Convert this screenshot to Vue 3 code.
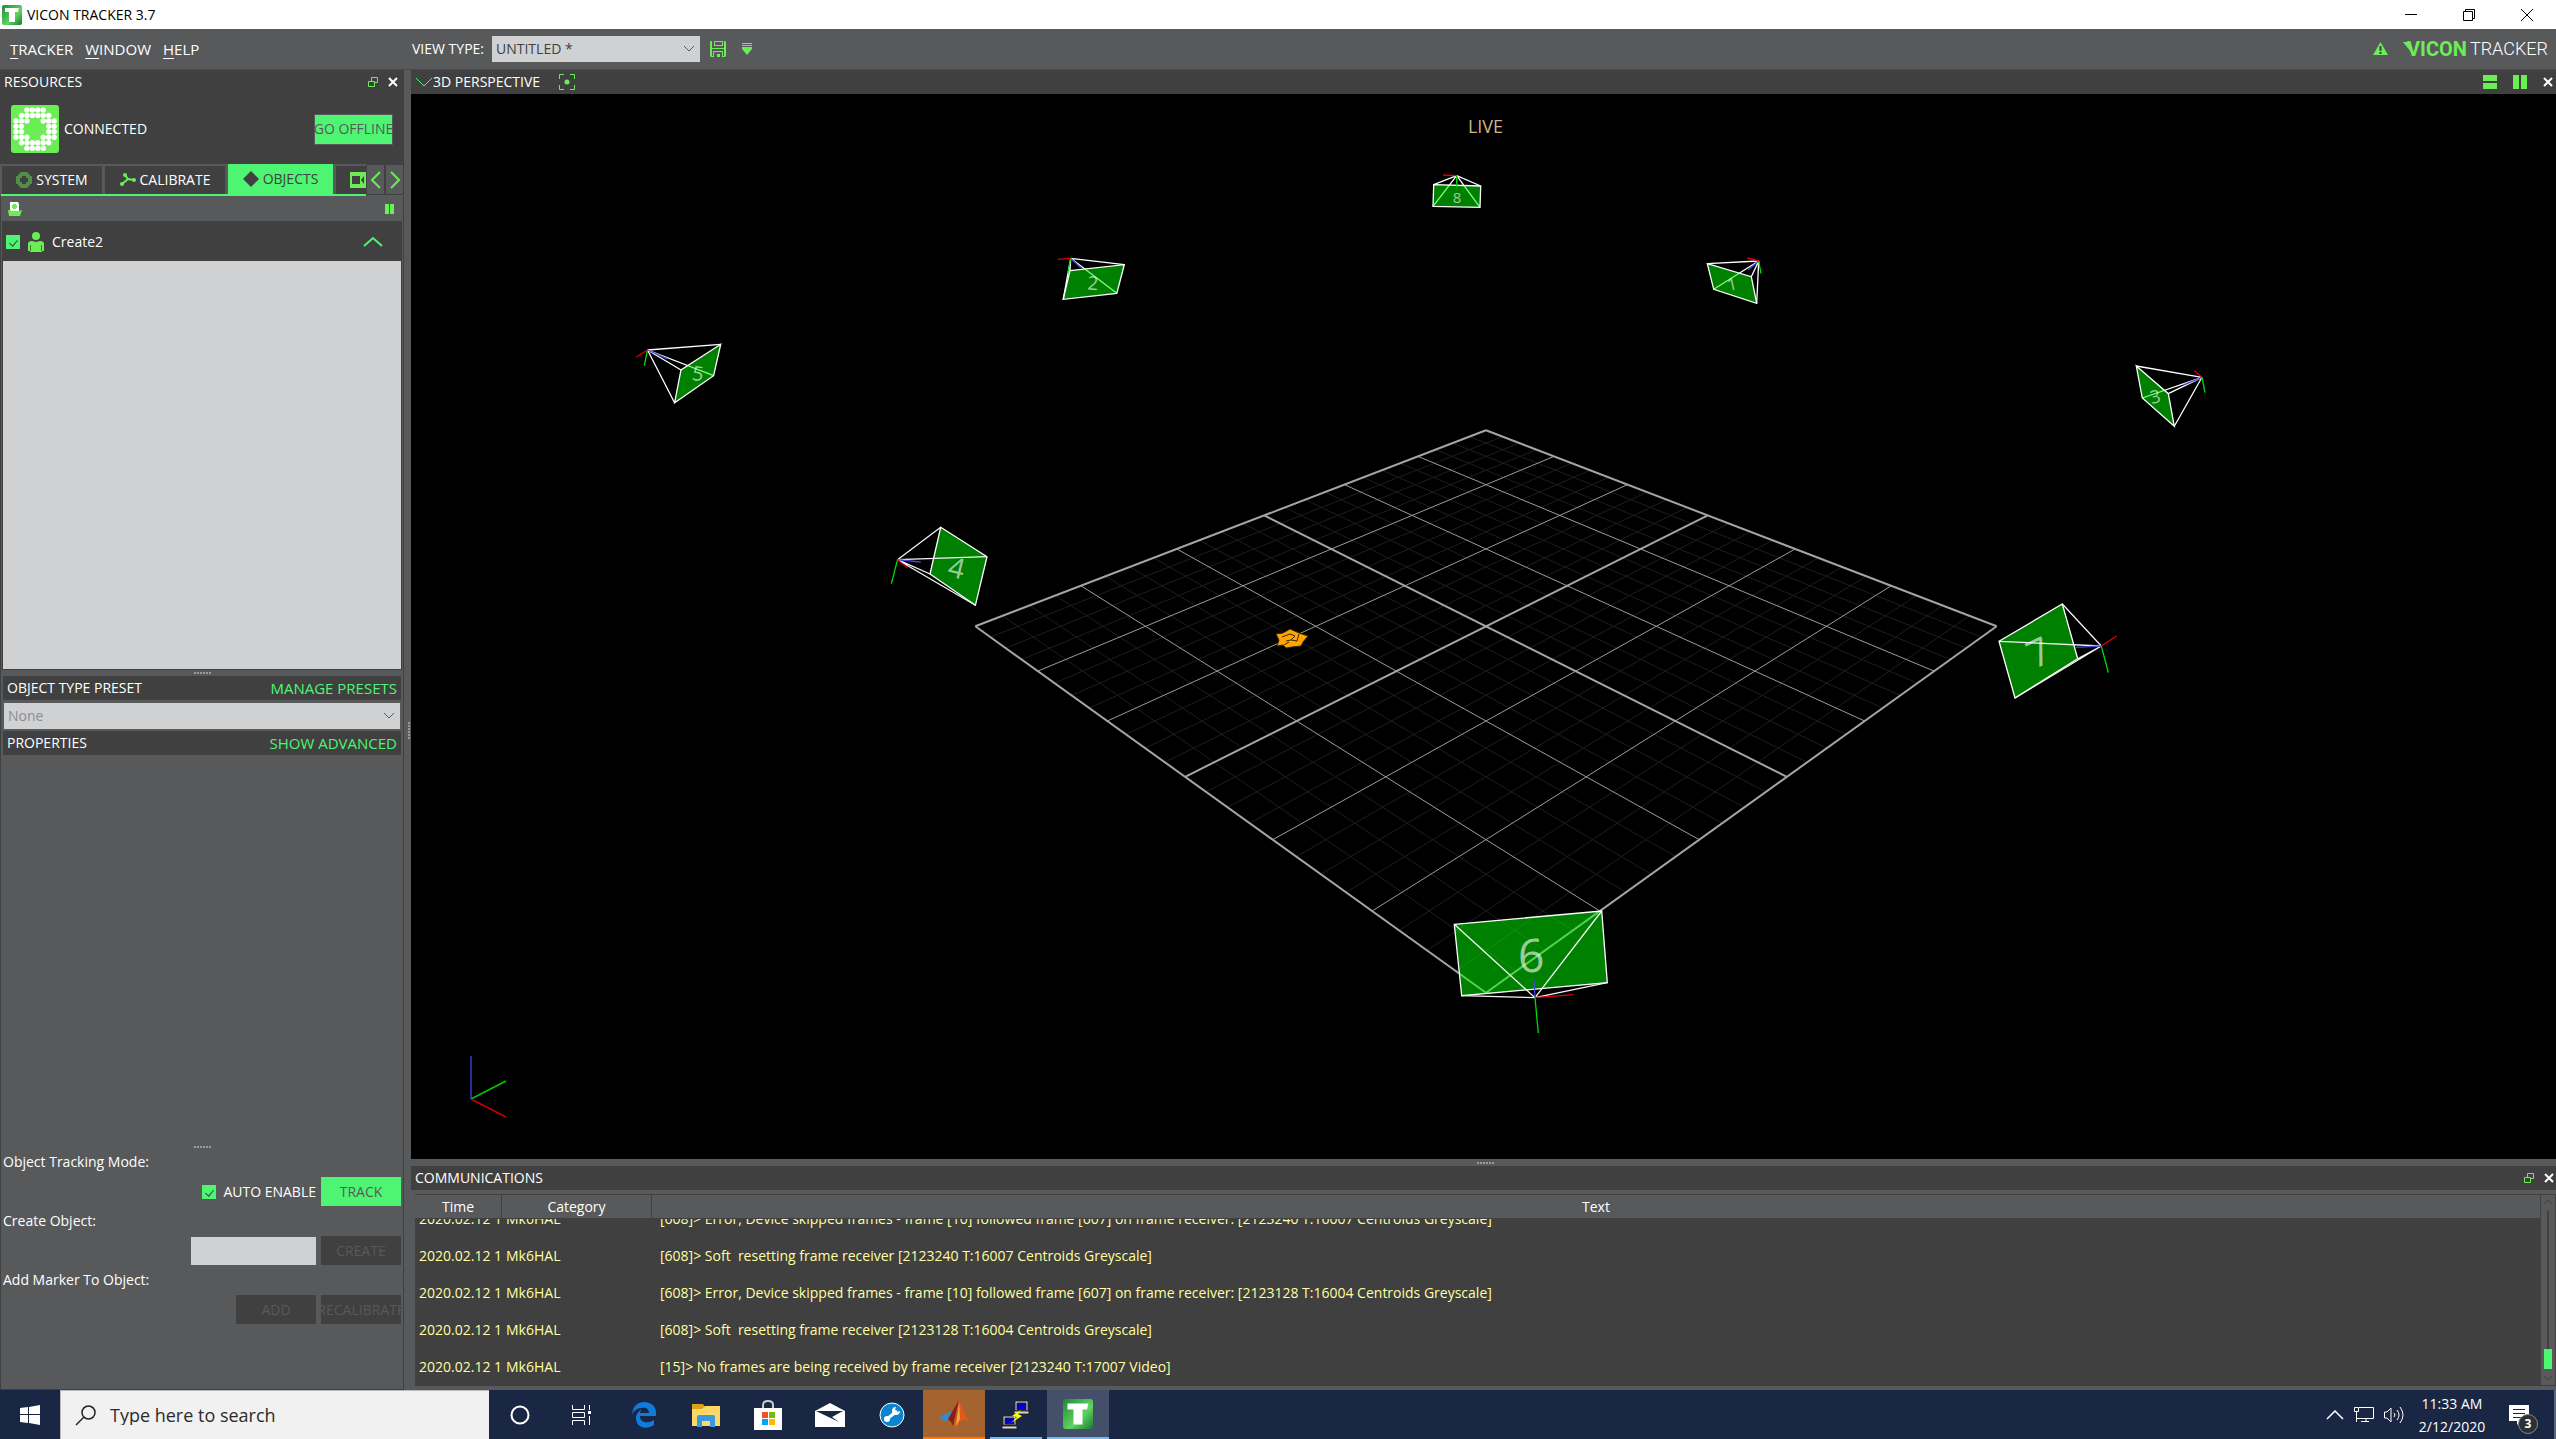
<script setup>
import { ref, onMounted } from 'vue'

const cameras = [
  { id: '8', size: 15, turn: 0, label: [1457, 197], front: false, apex: [1456.7, 175.7], quad: [[1433.7, 184.7], [1480.7, 186], [1480, 207.3], [1433, 206.3]], red: [1443, 175], green: [1456.7, 187], blue: [1456.7, 183] },
  { id: '2', size: 19, turn: 4, label: [1093, 283], front: false, apex: [1070.7, 258.3], quad: [[1070, 270.7], [1124.3, 264.7], [1116.8, 293.3], [1063.2, 299.3]], red: [1057.5, 259.3], green: [1068, 273], blue: [1080.7, 267.7] },
  { id: '1', size: 17, turn: -12, label: [1732, 284], front: false, apex: [1758.7, 261], quad: [[1707.3, 263.7], [1751.3, 276.7], [1756.7, 303.3], [1713.7, 289.3]], red: [1747.3, 258], green: [1761, 273.7], blue: [1748.3, 270] },
  { id: '5', size: 20, turn: 8, label: [698, 373], front: false, apex: [647.5, 350], quad: [[720.7, 344.3], [713.6, 375.7], [674.6, 402.7], [681, 370]], red: [636.4, 357], green: [644.3, 365.7], blue: [667, 358.7] },
  { id: '3', size: 18, turn: -12, label: [2155, 396], front: false, apex: [2202, 377.3], quad: [[2136.3, 366], [2168.3, 393.7], [2174.3, 426.3], [2142.3, 398]], red: [2194.3, 370.7], green: [2205, 392.7], blue: [2184.3, 384.7] },
  { id: '4', size: 28, turn: 14, label: [957, 567], front: true, apex: [897.5, 559.7], quad: [[940.7, 527.3], [987, 556.7], [975.4, 605.3], [930, 574]], red: [907.5, 567.7], green: [891.4, 583.7], blue: [920.7, 562] },
  { id: '7', size: 38, turn: -25, label: [2038, 651], front: true, apex: [2101.3, 646], quad: [[2062.3, 604], [2077.7, 658.7], [2015, 698], [1999, 641.3]], red: [2116.7, 636], green: [2108.3, 672.7], blue: [2075.3, 647.3] },
  { id: '6', size: 46, turn: -3, label: [1531, 954], front: true, apex: [1535, 997.7], quad: [[1454.3, 924.3], [1601.7, 911], [1607.3, 982.7], [1461.7, 995.7]], red: [1573.7, 994.7], green: [1538.3, 1033], blue: [1534, 980] },
]

const rays = (c) => c.quad.map((p) => `M${c.apex}L${p}`).join('')
const outline = (c) => `M${c.quad.join('L')}Z`

/* Floor plane in perspective: u and v run from -1 to 1 along its sides. */
function project(u, v) {
  const a = (u + v) / 2
  const b = (u - v) / 2
  const w = 1 - 0.303 * a
  return `${(1486 + (510.7 * b) / w).toFixed(1)} ${(626.3 + (255.4 * a) / w).toFixed(1)}`
}
function floorLines(test) {
  let d = ''
  for (let i = 0; i <= 24; i++) {
    if (!test(i)) continue
    const t = i / 12 - 1
    d += `M${project(t, -1)}L${project(t, 1)}M${project(-1, t)}L${project(1, t)}`
  }
  return d
}
const minorLines = floorLines((i) => i % 4 !== 0)
const majorLines = floorLines((i) => i % 4 === 0 && i % 12 !== 0)
const mainLines = floorLines((i) => i % 12 === 0)

const ringRows = ['..####..', '.######.', '###..###', '##....##', '##....##', '###..###', '.######.', '..####..']
const ringDots = ringRows.flatMap((row, y) => [...row].map((ch, x) => ({ ch, x, y })).filter((d) => d.ch === '#'))

const messages = [
  '[608]> Error, Device skipped frames - frame [10] followed frame [607] on frame receiver: [2123240 T:16007 Centroids Greyscale]',
  '[608]> Soft  resetting frame receiver [2123240 T:16007 Centroids Greyscale]',
  '[608]> Error, Device skipped frames - frame [10] followed frame [607] on frame receiver: [2123128 T:16004 Centroids Greyscale]',
  '[608]> Soft  resetting frame receiver [2123128 T:16004 Centroids Greyscale]',
  '[15]> No frames are being received by frame receiver [2123240 T:17007 Video]',
]

const log = ref(null)
onMounted(() => {
  log.value.scrollTop = log.value.scrollHeight
})
</script>

<template>
  <div class="screen">
    <header class="titlebar">
      <svg class="app-icon" width="20" height="20" viewBox="0 0 20 20">
        <defs>
          <linearGradient id="tg" x1="0" y1="0" x2="1" y2="1">
            <stop offset="0" stop-color="#1f8a35" />
            <stop offset=".6" stop-color="#5fd35f" />
            <stop offset="1" stop-color="#1c7a30" />
          </linearGradient>
        </defs>
        <rect width="20" height="20" rx="2" fill="url(#tg)" />
        <path d="M3 3h14l-1 4h-3v10H7V7H3z" fill="#fff" />
      </svg>
      <span class="title">VICON TRACKER 3.7</span>
      <div class="window-buttons">
        <button aria-label="Minimize"><svg width="12" height="12"><path d="M0 5.500h12" stroke="#000" /></svg></button>
        <button aria-label="Restore"><svg width="12" height="12"><path d="M.5 2.500h9v9h-9zM2.500 2.500v-2h9v9h-2" fill="none" stroke="#000" /></svg></button>
        <button aria-label="Close"><svg width="12" height="12"><path d="M0 0l12 12M12 0L0 12" stroke="#000" /></svg></button>
      </div>
    </header>

    <div class="menubar">
      <nav class="menus">
        <a href="#"><u>T</u>RACKER</a>
        <a href="#"><u>W</u>INDOW</a>
        <a href="#"><u>H</u>ELP</a>
      </nav>
      <label for="view-type">VIEW TYPE:</label>
      <div class="select-wrap view-select">
        <select id="view-type"><option>UNTITLED *</option></select>
        <svg width="12" height="8"><path d="M1 1l5 5 5-5" fill="none" stroke="#58595b" /></svg>
      </div>
      <button class="bare save" aria-label="Save view">
        <svg width="16" height="16" viewBox="0 0 16 16"><path fill="#6bee55" fill-rule="evenodd" d="M0 1L1 0h1v7h12V0h1l1 1v14l-1 1H1l-1-1zM4 0h9v5H4zM5 1v3h7V1zM4 16v-5h8v5h-2v-3H7v3zM2 8v7h1v-5h10v5h1V8z" /></svg>
      </button>
      <button class="bare" aria-label="More view options">
        <svg width="10" height="13" viewBox="0 0 10 13"><path fill="#6bee55" d="M0 0h10v1H0zM0 2h10v1H0zM0 4h10v2L5 12 0 6z" /></svg>
      </button>
      <svg class="warn" width="15" height="14" viewBox="0 0 15 14"><path fill="#6bee55" d="M7.500 0L15 13H0z" /><path d="M7.500 4v5M7.500 10v2" stroke="#404040" stroke-width="2" /></svg>
      <div class="brand">
        <svg width="8" height="14" viewBox="0 0 8 14"><path d="M0 0h5l3 5v5z" fill="#6bee55" /></svg>
        <b>VICON</b><span>TRACKER</span>
      </div>
    </div>

    <main class="workspace">
      <aside class="dock">
        <section class="resources">
          <div class="bar">
            <h2>RESOURCES</h2>
            <button class="bare" aria-label="Float panel"><svg width="10" height="10"><path d="M3.500 4V.5h6v5H6M.5 4.500h6v5h-6z" fill="none" stroke="#6bee55" /></svg></button>
            <button class="bare" aria-label="Close panel"><svg width="10" height="10"><path d="M1 1l8 8M9 1L1 9" stroke="#fff" stroke-width="2" /></svg></button>
          </div>
          <div class="connection">
            <svg width="48" height="48" viewBox="0 0 48 48">
              <rect width="48" height="48" rx="3" fill="#6bee55" />
              <circle v-for="d in ringDots" :key="`${d.x}-${d.y}`" :cx="5 + d.x * 5.450" :cy="5 + d.y * 5.450" r="2.700" fill="#fff" />
            </svg>
            <span>CONNECTED</span>
            <button class="offline">GO OFFLINE</button>
          </div>
        </section>

        <div class="tabs">
          <div class="tab-list">
            <button class="tab system">
              <svg width="16" height="16" viewBox="0 0 48 48"><circle v-for="d in ringDots" :key="`${d.x}-${d.y}`" :cx="3 + d.x * 6" :cy="3 + d.y * 6" r="2.500" fill="#6bee55" /></svg>
              SYSTEM
            </button>
            <button class="tab calibrate">
              <svg width="16" height="14" viewBox="0 0 16 14"><path d="M5 2l3 4 6 1M8 6L2 11" fill="none" stroke="#6bee55" stroke-width="2" /><circle cx="5" cy="2" r="2" fill="#6bee55" /><circle cx="14" cy="7" r="2" fill="#6bee55" /><circle cx="2" cy="11" r="2" fill="#6bee55" /></svg>
              CALIBRATE
            </button>
            <button class="tab objects active">
              <svg width="16" height="16" viewBox="0 0 16 16"><path d="M8 0l8 8-8 8-8-8z" fill="#404040" /></svg>
              OBJECTS
            </button>
            <button class="tab camera" aria-label="Camera">
              <svg width="16" height="16" viewBox="0 0 16 16"><path d="M0 0h16v16H0z" fill="#6bee55" /><path d="M2 4h8v8H2zM11 8l3-4v8z" fill="#404040" /></svg>
            </button>
          </div>
          <button class="step" aria-label="Previous tabs"><svg width="10" height="18"><path d="M9 1L1 9l8 8" fill="none" stroke="#6bee55" stroke-width="2" /></svg></button>
          <button class="step" aria-label="Next tabs"><svg width="10" height="18"><path d="M1 1l8 8-8 8" fill="none" stroke="#6bee55" stroke-width="2" /></svg></button>
        </div>

        <div class="tab-page">
          <div class="tools">
            <button class="bare" aria-label="Load object"><svg width="14" height="14"><path d="M2 0h8l1 2v7H2z" fill="#fff" /><path d="M0 8h3v1h8l3-1-2 6H1z" fill="#6bee55" /><path d="M6.500 2v5M4 4.500h5" stroke="#6bee55" stroke-width="3" /></svg></button>
            <button class="bare" aria-label="Pause"><svg width="10" height="10"><path d="M0 0h4v10H0zM5 0h4v10H5z" fill="#6bee55" /></svg></button>
          </div>
          <div class="object-list">
            <div class="object-row">
              <input id="create2" type="checkbox" checked />
              <svg width="16" height="20" viewBox="0 0 16 20"><circle cx="8" cy="4" r="4" fill="#6bee55" /><path d="M0 12q0-3 4-3l4 1 4-1q4 0 4 3v7h-2v1H2v-1H0z" fill="#6bee55" /><path d="M2.500 13v6M13.500 13v6" stroke="#404040" stroke-opacity=".7" /></svg>
              <label for="create2">Create2</label>
              <svg class="collapse" width="20" height="12"><path d="M1 10l9-8 9 8" fill="none" stroke="#4ef573" stroke-width="2" /></svg>
            </div>
          </div>
          <div class="grip"><i v-for="n in 6" :key="n"></i></div>
          <div class="strip"><label for="preset">OBJECT TYPE PRESET</label><a href="#">MANAGE PRESETS</a></div>
          <div class="select-wrap preset-select">
            <select id="preset" disabled><option>None</option></select>
            <svg width="12" height="8"><path d="M1 1l5 5 5-5" fill="none" stroke="#58595b" /></svg>
          </div>
          <div class="strip"><h2>PROPERTIES</h2><a href="#">SHOW ADVANCED</a></div>
          <div class="property-area"></div>
          <div class="grip form-grip"><i v-for="n in 6" :key="n"></i></div>
          <form class="actions" @submit.prevent>
            <p>Object Tracking Mode:</p>
            <div class="action-row">
              <input id="auto" type="checkbox" checked />
              <label for="auto" class="auto-label">AUTO ENABLE</label>
              <button class="primary">TRACK</button>
            </div>
            <label for="new-object" class="caption">Create Object:</label>
            <div class="action-row">
              <input id="new-object" type="text" />
              <button disabled>CREATE</button>
            </div>
            <p>Add Marker To Object:</p>
            <div class="action-row">
              <button disabled>ADD</button>
              <button disabled>RECALIBRATE</button>
            </div>
          </form>
        </div>
      </aside>

      <div class="grip vertical"><i v-for="n in 6" :key="n"></i></div>

      <div class="content">
        <div class="bar view-bar">
          <svg width="16" height="10"><path d="M0 1l8 8 8-8" fill="none" stroke="#4ef573" /></svg>
          <h2>3D PERSPECTIVE</h2>
          <button class="bare focus" aria-label="Focus"><svg width="16" height="16"><path d="M5 .5H.5V5M11 .5h4.500V5M5 15.500H.5V11M11 15.500h4.500V11" fill="none" stroke="#6bee55" /><circle cx="8" cy="8" r="2.500" fill="#6bee55" /></svg></button>
          <button class="bare" aria-label="Split horizontally"><svg width="14" height="14"><path d="M0 0h14v6H0zM0 8h14v6H0z" fill="#6bee55" /></svg></button>
          <button class="bare" aria-label="Split vertically"><svg width="14" height="14"><path d="M0 0h6v14H0zM8 0h6v14H8z" fill="#6bee55" /></svg></button>
          <button class="bare" aria-label="Close view"><svg width="10" height="10"><path d="M1 1l8 8M9 1L1 9" stroke="#fff" stroke-width="2" /></svg></button>
        </div>

        <div class="viewport">
          <svg class="scene" viewBox="411 94 2145 1065" preserveAspectRatio="xMidYMid slice">
            <path :d="minorLines" stroke="#1e1e1e" />
            <path :d="majorLines" stroke="#9c9c9c" />
            <path :d="mainLines" stroke="#a4a4a4" stroke-width="2" />

            <g stroke="#3a2600" stroke-width="1">
              <path d="M1276 634l7-1 7-4 9 4 9 3-5 6-2 4-9 1-6 1-3-3-6 1 2-6z" fill="#ffa500" />
              <path d="M1282 637l8-3 5 2-4 4-5 1M1291 640l6 1M1299 634l-2 7M1284 645l5-3" fill="none" />
            </g>

            <g v-for="c in cameras" :key="c.id" fill="none" stroke-width="1.300">
              <path v-if="!c.front" :d="rays(c)" stroke="#fff" />
              <path :d="outline(c)" fill="#0f0" fill-opacity=".5" stroke="#fff" />
              <text :x="c.label[0]" :y="c.label[1]" :font-size="c.size" :transform="`rotate(${c.turn} ${c.label})`">{{ c.id }}</text>
              <path v-if="c.front" :d="rays(c)" stroke="#f4f4f4" />
              <path :d="`M${c.apex}L${c.blue}`" stroke="#4444e0" />
              <path :d="`M${c.apex}L${c.green}`" stroke="#0d0" />
              <path :d="`M${c.apex}L${c.red}`" stroke="#e00000" />
            </g>

            <g stroke-width="1.500">
              <path d="M471 1099V1056" stroke="#2c2c98" stroke-width="2" />
              <path d="M471 1099L506 1081" stroke="#00c800" />
              <path d="M471 1099L506 1117" stroke="#c80000" />
            </g>
          </svg>
          <span class="live">LIVE</span>
        </div>

        <div class="grip comm-grip"><i v-for="n in 6" :key="n"></i></div>

        <section class="communications">
          <div class="bar comm-bar">
            <h2>COMMUNICATIONS</h2>
            <button class="bare" aria-label="Float panel"><svg width="10" height="10"><path d="M3.500 4V.5h6v5H6M.5 4.500h6v5h-6z" fill="none" stroke="#6bee55" /></svg></button>
            <button class="bare" aria-label="Close panel"><svg width="10" height="10"><path d="M1 1l8 8M9 1L1 9" stroke="#fff" stroke-width="2" /></svg></button>
          </div>
          <div class="log-frame">
            <div ref="log" class="log">
              <table>
                <colgroup><col class="c-time" /><col class="c-cat" /><col /></colgroup>
                <thead><tr><th>Time</th><th>Category</th><th>Text</th></tr></thead>
                <tbody>
                  <tr v-for="(m, i) in messages" :key="i"><td>2020.02.12 1</td><td>Mk6HAL</td><td>{{ m }}</td></tr>
                </tbody>
              </table>
            </div>
            <div class="scrollbar">
              <svg width="10" height="6"><path d="M1 5l4-4 4 4" fill="none" stroke="#404040" /></svg>
              <div class="track"><div class="thumb"></div></div>
              <svg width="10" height="6"><path d="M1 1l4 4 4-4" fill="none" stroke="#404040" /></svg>
            </div>
          </div>
        </section>
      </div>
    </main>

    <footer class="taskbar">
      <button class="start" aria-label="Start"><svg width="20" height="20" viewBox="0 0 20 20"><path d="M0 3l8-1v7H0zM9 2l11-2v9H9zM0 10h8v8l-8-1zM9 10h11v10L9 18z" fill="#fff" /></svg></button>
      <div class="search">
        <svg width="22" height="22"><circle cx="13.500" cy="8.500" r="6.500" fill="none" stroke="#222" stroke-width="1.500" /><path d="M9 13l-8 8" stroke="#222" stroke-width="1.500" /></svg>
        <input type="text" placeholder="Type here to search" aria-label="Type here to search" />
      </div>
      <button class="app" aria-label="Cortana"><svg width="20" height="20"><circle cx="10" cy="10" r="8.500" fill="none" stroke="#fff" stroke-width="2" /></svg></button>
      <button class="app" aria-label="Task view"><svg width="22" height="20"><path d="M1.500 0v4.500h12V0M1.500 20v-4.500h12V20M1.500 7.500h12v5h-12zM18.500 0v5M18.500 11v9" fill="none" stroke="#fff" /><path d="M17 6h3v3h-3z" fill="#fff" /></svg></button>
      <button class="app" aria-label="Edge"><svg width="26" height="26" viewBox="0 0 24 26"><path d="M0 12C1 4 6 0 12 0c8 0 12 5 12 11v3H8c0 7 8 8 14 4v5c-8 5-18 3-18-7 0-4 3-7 6-9-1 1-2 3-2 4h9c0-5-4-6-8-5-4 0-7 3-9 6z" fill="#0f7bdc" /></svg></button>
      <button class="app" aria-label="File Explorer"><svg width="28" height="24" viewBox="0 0 28 24"><path d="M0 1h11l2 3h14v6H0z" fill="#dba016" /><path d="M0 6h10l3-3h15v20H0z" fill="#ffd766" /><path d="M5 24V14q0-2 2-2h14q2 0 2 2v10h-5v-6h-8v6z" fill="#3a9ade" /></svg></button>
      <button class="app" aria-label="Store"><svg width="28" height="30" viewBox="0 0 28 30"><path d="M9 8V5q0-4 5-4t5 4v3" fill="none" stroke="#ccc" stroke-width="2" /><path d="M0 8h28v22H0z" fill="#fff" /><path d="M8 12h6v6H8z" fill="#f25022" /><path d="M15 12h6v6h-6z" fill="#7fba00" /><path d="M8 19h6v6H8z" fill="#00a4ef" /><path d="M15 19h6v6h-6z" fill="#ffb900" /></svg></button>
      <button class="app" aria-label="Mail"><svg width="30" height="24" viewBox="0 0 30 24"><path d="M0 8L15 0l15 8v16H0z" fill="#fff" /><path d="M1 8h27L17 14l7 5z" fill="#1a2744" /></svg></button>
      <button class="app" aria-label="Support"><svg width="26" height="26"><circle cx="13" cy="13" r="12" fill="#0a84d0" stroke="#fff" /><path d="M8 17l10-8" stroke="#fff" stroke-width="3" /><circle cx="8" cy="17" r="3" fill="#fff" /><path d="M21 9a4 4 0 1 1-4-4l-1 3 2 2z" fill="#fff" /></svg></button>
      <button class="app matlab" aria-label="MATLAB"><svg width="30" height="28"><path d="M0 17l8-4 6-2-4 8-4 3z" fill="#3a8ac4" /><path d="M9 19L20 0l-6 26q-2-5-5-7z" fill="#8c1d18" /><path d="M20 0q4 12 10 22-6-4-9 0-3 5-6 6 3-12 5-28z" fill="#e05a1c" /><path d="M20 2l1 17-4 7z" fill="#f6a63c" /></svg></button>
      <button class="app running" aria-label="PuTTY"><svg width="30" height="30"><g stroke="#222"><path d="M14 1h13v10H14zM2 16h13v9H2z" fill="#d8d8d8" /><path d="M16 3h9v7h-9zM4 18h9v6H4z" fill="#0000d0" /><path d="M13 11h15v3H13zM1 26h15v3H1z" fill="#d8d8d8" /></g><path d="M20 10l-9 6 5 1-6 6 11-7-4-2z" fill="#ff0" /></svg></button>
      <button class="app current" aria-label="Vicon Tracker"><svg width="30" height="30" viewBox="0 0 20 20"><rect width="20" height="20" rx="2" fill="url(#tg)" /><path d="M3 3h14l-1 4h-3v10H7V7H3z" fill="#fff" /></svg></button>
      <div class="tray">
        <svg width="18" height="10"><path d="M1 9l8-8 8 8" fill="none" stroke="#fff" stroke-width="1.500" /></svg>
        <svg width="20" height="17"><path d="M5 1.500h14.500v11H3M12 13v3M7 15.500h8M.5 1.500h4v4h-4zM2.500 6v10" fill="none" stroke="#fff" /></svg>
        <svg width="22" height="18"><path d="M.5 6v6H3l4 4V2L3 6zM10 7q2 2 0 4M13 4q4 5 0 10M16 1q6 8 0 16" fill="none" stroke="#fff" /></svg>
      </div>
      <div class="clock"><time>11:33 AM</time><time>2/12/2020</time></div>
      <button class="notice" aria-label="Notifications">
        <svg width="20" height="20"><path d="M0 0h20v16h-8l-4 4v-4H0z" fill="#fff" /><path d="M4 4.500h12M4 8.500h12M4 12.500h8" stroke="#1a2744" /></svg>
        <span>3</span>
      </button>
    </footer>
  </div>
</template>

<style>
body {
  margin: 0;
  background: #58595b;
}
</style>

<style scoped>
* {
  box-sizing: border-box;
}
.screen {
  display: flex;
  flex-direction: column;
  min-height: 100vh;
  font: 14px/20px "Open Sans", "Noto Sans", sans-serif;
  color: #fff;
  background: #58595b;
}
svg {
  display: block;
  flex: none;
}
h2,
p {
  margin: 0;
  font-size: inherit;
  font-weight: 400;
}
a {
  color: inherit;
  text-decoration: none;
}
button,
input,
select {
  font: inherit;
  color: inherit;
  border: 0;
  border-radius: 0;
  margin: 0;
  padding: 0;
  background: none;
}
.bare {
  display: flex;
}
.titlebar {
  display: flex;
  align-items: center;
  height: 29px;
  padding-left: 2px;
  gap: 5px;
  background: #fff;
  color: #000;
}
.window-buttons {
  display: flex;
  margin-left: auto;
}
.window-buttons button {
  width: 58px;
  height: 29px;
  display: grid;
  place-items: center;
}
.menubar {
  display: flex;
  align-items: center;
  height: 41px;
  padding-right: 8px;
  border-bottom: 1px solid #4a4a4b;
}
.menus {
  display: flex;
  gap: 12px;
  width: 412px;
  padding-left: 10px;
  font-size: 15px;
}
.menus u {
  text-underline-offset: 3px;
}
.menubar label {
  width: 80px;
}
.select-wrap {
  position: relative;
  height: 26px;
  background: #d0d1d3;
  color: #404040;
}
.select-wrap select {
  appearance: none;
  width: 100%;
  height: 26px;
  padding-left: 4px;
  opacity: 1;
}
.select-wrap svg {
  position: absolute;
  right: 5px;
  top: 9px;
  pointer-events: none;
}
.view-select {
  width: 208px;
  margin-right: 10px;
}
.save {
  margin-right: 16px;
}
.warn {
  margin-left: auto;
  margin-right: 15px;
}
.brand {
  display: flex;
  align-items: center;
  font-family: Roboto, sans-serif;
}
.brand svg {
  margin-right: -4px;
}
.brand b {
  font-size: 20px;
  font-weight: 700;
  color: #6bee55;
}
.brand span {
  margin-left: 3px;
  font-size: 18px;
  font-weight: 300;
}
.workspace {
  flex: 1;
  display: flex;
}
.dock {
  display: flex;
  flex-direction: column;
  width: 404px;
  flex: none;
}
.bar {
  display: flex;
  align-items: center;
  height: 24px;
  padding: 0 6px 0 4px;
  gap: 10px;
  background: #404040;
}
.bar h2 {
  margin-right: auto;
}
.comm-bar {
  padding-right: 2px;
}
.resources {
  background: #404040;
}
.connection {
  display: flex;
  align-items: center;
  height: 70px;
  padding: 0 11px;
  gap: 5px;
}
.offline {
  width: 79px;
  height: 31px;
  margin-left: auto;
  display: flex;
  justify-content: center;
  align-items: center;
  overflow: hidden;
  white-space: nowrap;
  border: 1px solid #58595b;
  background: #4ef573;
  color: #58595b;
}
.tabs {
  display: flex;
  height: 32px;
  padding-left: 1px;
}
.tab-list {
  display: flex;
  flex: 1;
  gap: 3px;
  border-bottom: 2px solid #4ef573;
  padding: 0 0 0 1px;
}
.tab {
  display: flex;
  align-items: center;
  justify-content: center;
  gap: 4px;
  height: 28px;
  margin-top: 2px;
  background: #404040;
}
.tab.system {
  width: 100px;
}
.tab.calibrate {
  width: 120px;
}
.tab.objects {
  width: 105px;
}
.tab.camera {
  flex: 1;
  justify-content: flex-end;
}
.tab.active {
  height: 30px;
  margin-top: 0;
  background: #4ef573;
  color: #404040;
}
.step {
  width: 19px;
  height: 31px;
  display: grid;
  place-items: center;
  border: 1px solid #404040;
}
.tab-page {
  flex: 1;
  display: flex;
  flex-direction: column;
  border: 1px solid #404040;
  border-top: 0;
  padding: 0 1px;
}
.tools {
  display: flex;
  align-items: center;
  justify-content: space-between;
  height: 25px;
  padding: 0 7px 0 6px;
}
.object-list {
  height: 449px;
  border: 1px solid #404040;
  background: #d0d1d3;
}
.object-row {
  display: flex;
  align-items: center;
  height: 39px;
  padding: 0 18px 0 3px;
  gap: 8px;
  background: #404040;
}
.collapse {
  margin-left: auto;
}
input[type="checkbox"] {
  appearance: none;
  width: 14px;
  height: 14px;
  display: grid;
  place-items: center;
  background: #4ef573;
}
input[type="checkbox"]::after {
  content: "";
  width: 4px;
  height: 7px;
  border: solid #404040;
  border-width: 0 1px 1px 0;
  rotate: 40deg;
}
.grip {
  display: flex;
  justify-content: center;
  align-items: center;
  gap: 1px;
  height: 6px;
}
.grip i {
  width: 2px;
  height: 2px;
  background: #9a9b9d;
}
.vertical {
  flex-direction: column;
  width: 7px;
  height: auto;
  padding-left: 3px;
}
.comm-grip {
  height: 7px;
  padding-left: 4px;
}
.strip {
  display: flex;
  align-items: center;
  justify-content: space-between;
  height: 24px;
  margin: 0 1px;
  padding: 0 4px;
  background: #404040;
}
.strip a {
  font-size: 15px;
  color: #4ef573;
}
.preset-select {
  margin: 3px 2px 2px;
  color: #8c8d8f;
}
.property-area {
  flex: 1;
}
.actions {
  display: flex;
  flex-direction: column;
  padding: 0 1px 65px;
}
.actions p,
.caption {
  height: 30px;
  line-height: 30px;
}
.form-grip {
  height: 1px;
}
.action-row {
  display: flex;
  align-items: center;
  justify-content: flex-end;
  gap: 5px;
  height: 29px;
}
.auto-label {
  padding-left: 2px;
}
.action-row button {
  display: flex;
  justify-content: center;
  align-items: center;
  width: 80px;
  height: 29px;
  overflow: hidden;
  background: #404040;
  color: #58595b;
}
.action-row .primary {
  background: #4ef573;
}
.action-row input[type="text"] {
  width: 125px;
  height: 28px;
  background: #d0d1d3;
  color: #404040;
}
.content {
  flex: 1;
  min-width: 0;
  display: flex;
  flex-direction: column;
}
.view-bar {
  padding: 0 3px 0 5px;
  gap: 16px;
}
.view-bar h2 {
  margin: 0 3px 0 -15px;
}
.focus {
  margin-right: auto;
}
.viewport {
  flex: 1;
  position: relative;
  min-height: 480px;
  background: #000;
}
.scene {
  position: absolute;
  inset: 0;
  width: 100%;
  height: 100%;
}
.scene text {
  fill: #fff;
  fill-opacity: .62;
  text-anchor: middle;
  dominant-baseline: central;
}
.live {
  position: absolute;
  inset: 20px 0 auto 4px;
  text-align: center;
  font-size: 18px;
  line-height: 24px;
  color: #d2b48c;
}
.communications {
  padding-bottom: 4px;
}
.log-frame {
  display: flex;
  height: 192px;
  margin: 4px 0 0 4px;
  border: 1px solid #404040;
  border-width: 1px 1px 1px 0;
}
.log {
  flex: 1;
  overflow: hidden;
  background: #404040;
}
table {
  width: 100%;
  table-layout: fixed;
  border-collapse: separate;
  border-spacing: 0;
}
.c-time {
  width: 87px;
}
.c-cat {
  width: 150px;
}
th {
  position: sticky;
  top: 0;
  height: 24px;
  padding: 0;
  font-weight: 400;
  background: #58595b;
  border: solid #404040;
  border-width: 0 1px 1px 0;
}
td {
  height: 37px;
  padding: 0 0 0 4px;
  overflow: hidden;
  white-space: pre;
  color: #ffffa0;
}
td:last-child {
  padding-left: 8px;
}
.scrollbar {
  display: flex;
  flex-direction: column;
  align-items: center;
  width: 14px;
  padding: 4px 0;
  gap: 6px;
}
.track {
  flex: 1;
  display: flex;
  align-items: flex-end;
  justify-content: center;
  width: 2px;
  background: #404040;
}
.thumb {
  flex: none;
  width: 8px;
  height: 20px;
  background: #4ef573;
}
.taskbar {
  display: flex;
  height: 49px;
  background: #1a2744;
}
.taskbar button {
  display: grid;
  place-items: center;
}
.start {
  width: 60px;
}
.search {
  display: flex;
  align-items: center;
  width: 429px;
  padding-left: 14px;
  gap: 13px;
  border: solid #b8b8b8;
  border-width: 1px 0 0 1px;
  background: #f1f1f1;
  color: #2b2b2b;
}
.search input {
  flex: 1;
  font-size: 18px;
}
.search input::placeholder {
  color: #2b2b2b;
}
.app {
  width: 62px;
}
.matlab {
  background: #a5642f;
  border-bottom: 2px solid #ff7800;
}
.running {
  background: linear-gradient(#76b9ed, #76b9ed) 50% 100% / 52px 2px no-repeat;
}
.current {
  background: #445069;
  border-bottom: 2px solid #76b9ed;
}
.tray {
  display: flex;
  align-items: center;
  gap: 10px;
  margin-left: auto;
}
.clock {
  display: flex;
  flex-direction: column;
  justify-content: center;
  width: 92px;
  line-height: 23px;
  text-align: center;
}
.taskbar .notice {
  position: relative;
  width: 58px;
  padding-right: 14px;
  border-right: 2px solid #5c667c;
}
.notice span {
  position: absolute;
  left: 20px;
  top: 24px;
  width: 20px;
  height: 20px;
  border: 1px solid #888;
  border-radius: 50%;
  font-weight: 700;
  font-size: 12px;
  line-height: 18px;
  background: #2b2f38;
}
</style>
